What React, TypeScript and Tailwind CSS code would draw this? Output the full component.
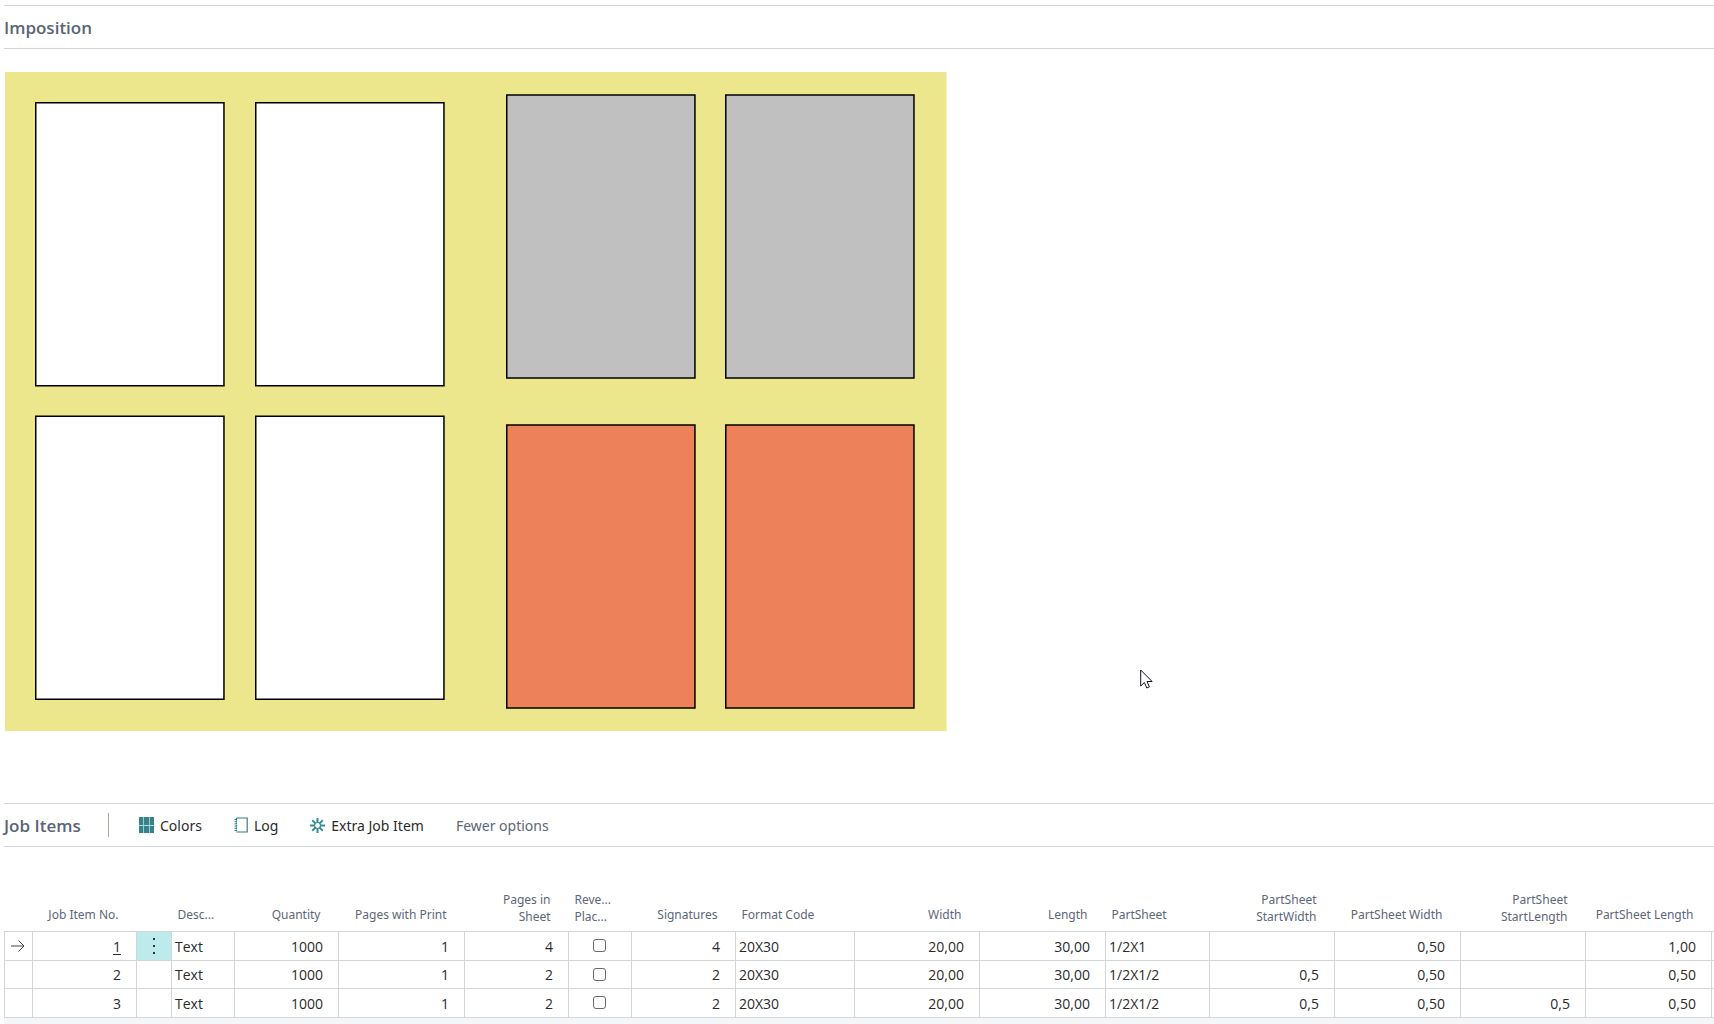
type Column = {
  label: string;
  width: string;
  align: 'left' | 'right' | 'center';
};

const columns: Column[] = [
  { label: 'Job Item No.', width: 'w-[104px]', align: 'right' },
  { label: '', width: 'w-[35px]', align: 'center' },
  { label: 'Desc...', width: 'w-[63px]', align: 'left' },
  { label: 'Quantity', width: 'w-[104px]', align: 'right' },
  { label: 'Pages with Print', width: 'w-[126px]', align: 'right' },
  { label: 'Pages in\nSheet', width: 'w-[104px]', align: 'right' },
  { label: 'Reve...\nPlac...', width: 'w-[63px]', align: 'left' },
  { label: 'Signatures', width: 'w-[104px]', align: 'right' },
  { label: 'Format Code', width: 'w-[119px]', align: 'left' },
  { label: 'Width', width: 'w-[125px]', align: 'right' },
  { label: 'Length', width: 'w-[126px]', align: 'right' },
  { label: 'PartSheet', width: 'w-[104px]', align: 'left' },
  { label: 'PartSheet\nStartWidth', width: 'w-[125px]', align: 'right' },
  { label: 'PartSheet Width', width: 'w-[126px]', align: 'right' },
  { label: 'PartSheet\nStartLength', width: 'w-[125px]', align: 'right' },
  { label: 'PartSheet Length', width: 'w-[126px]', align: 'right' },
];

const MENU = 'menu';
const CHECK = 'check';

const rows: string[][] = [
  ['1', MENU, 'Text', '1000', '1', '4', CHECK, '4', '20X30', '20,00', '30,00', '1/2X1', '', '0,50', '', '1,00'],
  ['2', '', 'Text', '1000', '1', '2', CHECK, '2', '20X30', '20,00', '30,00', '1/2X1/2', '0,5', '0,50', '', '0,50'],
  ['3', '', 'Text', '1000', '1', '2', CHECK, '2', '20X30', '20,00', '30,00', '1/2X1/2', '0,5', '0,50', '0,5', '0,50'],
];

const pages = [
  { x: 30, y: 30, fill: '#ffffff' },
  { x: 250, y: 30, fill: '#ffffff' },
  { x: 30, y: 343.5, fill: '#ffffff' },
  { x: 250, y: 343.5, fill: '#ffffff' },
  { x: 501, y: 22.25, fill: '#c0c0c0' },
  { x: 720, y: 22.25, fill: '#c0c0c0' },
  { x: 501, y: 352.25, fill: '#ed8159' },
  { x: 720, y: 352.25, fill: '#ed8159' },
];

function ImpositionSheet() {
  return (
    <svg width="942" height="659" viewBox="0 0 942 659" role="img" aria-label="Imposition sheet" className="block">
      <rect width="941.5" height="659" fill="#ece68d" />
      {pages.map((p, i) => (
        <rect
          key={i}
          x={p.x + 0.75}
          y={p.y + 0.75}
          width="188.2"
          height="283"
          fill={p.fill}
          stroke="#000"
          strokeWidth="1.5"
        />
      ))}
    </svg>
  );
}

function ColorsIcon() {
  return (
    <svg width="15" height="16" viewBox="0 0 15 16" aria-hidden="true">
      <rect width="15" height="16" fill="#34828a" />
      <path d="M4.5 0v16M10.5 0v16" stroke="#a3c8cb" strokeWidth="1" />
      <path d="M0 8.500h15" stroke="#b9d8da" strokeWidth="1" />
    </svg>
  );
}

function LogIcon() {
  return (
    <svg width="14" height="16" viewBox="0 0 14 16" fill="none" aria-hidden="true">
      <path d="M2.500 1H13.200V15H2.500" stroke="#2f8087" strokeWidth="1.2" />
      <path d="M2.500 1V15" stroke="#2f8087" strokeWidth="1.2" strokeDasharray="1.300 1" />
      <path d="M.5 2.500h2.500M.5 4.700h2.500M.5 6.900h2.500M.5 9.100h2.500M.5 11.300h2.500M.5 13.500h2.500" stroke="#2f8087" strokeWidth="1" />
    </svg>
  );
}

function ExtraIcon() {
  return (
    <svg width="15" height="15" viewBox="0 0 15 15" fill="none" stroke="#3a8b92" strokeWidth="2" aria-hidden="true">
      <circle cx="7.5" cy="7.5" r="3" strokeWidth="1.2" />
      <path d="M7.5 0v4.500M7.500 10.500v4.500M0 7.500h4.500M10.500 7.500h4.500M2.200 2.200l3.200 3.200M9.600 9.600l3.200 3.200M12.800 2.200L9.600 5.400M5.400 9.600l-3.200 3.200" />
    </svg>
  );
}

function Cell({ value, column }: { value: string; column: number }) {
  if (value === MENU) {
    return (
      <button type="button" aria-label="Row options" className="flex h-7 w-full items-center justify-center bg-[#bdeaeb]">
        <svg width="4" height="18" viewBox="0 0 4 18" fill="#333" aria-hidden="true">
          <rect x="1" y="1" width="2" height="2" />
          <rect x="1" y="8" width="2" height="2" />
          <rect x="1" y="15" width="2" height="2" />
        </svg>
      </button>
    );
  }
  if (value === CHECK) {
    return (
      <input
        type="checkbox"
        aria-label="Reverse placement"
        className="mx-auto block size-[13px] appearance-none rounded-[3px] border border-[#6a6a6a] bg-white"
      />
    );
  }
  if (column === 0 && value === '1') {
    return (
      <a href="#item-1" className="underline underline-offset-2">
        {value}
      </a>
    );
  }
  return <>{value}</>;
}

const bodyPadding = { left: 'pl-[3px] text-left', right: 'pr-[15px] text-right', center: 'text-center' };
const headPadding = { left: 'pl-1.5 text-left', right: 'pr-[18px] text-right', center: 'text-center' };

export default function App() {
  return (
    <div className="min-h-screen overflow-hidden bg-white pl-1 pt-[5px] font-['Open_Sans',sans-serif] text-[#2b2b2b]">
      <section>
        <h2 className="flex h-11 items-center border-y border-[#d2d5da] pt-0.5 text-[17px] font-semibold text-[#5a6478]">
          Imposition
        </h2>
        <div className="pl-px pt-[23px]">
          <ImpositionSheet />
        </div>
      </section>

      <section className="mt-[72px]">
        <header className="flex h-11 items-center border-y border-[#d2d5da] font-['Noto_Sans',sans-serif] text-sm">
          <h2 className="w-[104px] pt-0.5 font-['Open_Sans',sans-serif] text-[17px] font-semibold text-[#5a6478]">
            Job Items
          </h2>
          <div className="mr-[30px] h-6 w-px bg-[#a5abb5]" />
          <button type="button" className="mr-8 flex items-center gap-1.5">
            <ColorsIcon />
            <span className="pt-0.5">Colors</span>
          </button>
          <button type="button" className="mr-8 flex items-center gap-1.5">
            <LogIcon />
            <span className="pt-0.5">Log</span>
          </button>
          <button type="button" className="mr-8 flex items-center gap-1.5">
            <ExtraIcon />
            <span className="pt-0.5">Extra Job Item</span>
          </button>
          <button type="button" className="pt-0.5 text-[#5c6779]">
            Fewer options
          </button>
        </header>

        <table className="mt-8 w-full table-fixed border-collapse text-sm">
          <thead>
            <tr className="h-[52px] font-['Noto_Sans',sans-serif] text-xs leading-[17px] text-[#5c6779]">
              <th className="w-7" aria-label="Selected" />
              {columns.map((c, i) => (
                <th
                  key={i}
                  className={`${c.width} ${headPadding[c.align]} ${c.label.includes('\n') ? 'pb-1.5' : 'pb-2'} whitespace-pre align-bottom font-normal`}
                >
                  {c.label}
                </th>
              ))}
              <th aria-hidden="true" />
            </tr>
          </thead>
          <tbody>
            {rows.map((row, r) => (
              <tr key={r} className={r === 1 ? 'h-7' : 'h-[29px]'}>
                <td className="border border-[#d2d5da] p-0">
                  {r === 0 && (
                    <svg width="14" height="14" viewBox="0 0 14 14" fill="none" stroke="#444" className="ml-1.5" aria-hidden="true">
                      <path d="M0 7h13M7.500 1.500L13 7l-5.500 5.500" />
                    </svg>
                  )}
                </td>
                {row.map((value, i) => (
                  <td
                    key={i}
                    className={`border border-[#d2d5da] leading-5 ${value === MENU ? 'p-0' : value === CHECK ? 'py-0 pr-0.5' : `pb-0 pt-0.5 ${bodyPadding[columns[i].align]}`}`}
                  >
                    <Cell value={value} column={i} />
                  </td>
                ))}
                <td className="border-y border-[#d2d5da]" />
              </tr>
            ))}
          </tbody>
        </table>
        <div className="h-2 bg-[#f5f6f8]" />
      </section>

      <svg
        width="13"
        height="20"
        viewBox="0 0 13 20"
        className="pointer-events-none absolute left-[1140px] top-[669px]"
        aria-hidden="true"
      >
        <path d="M.7 1v16l3.700-3.500 2.400 5.500 2.600-1.100-2.400-5.400h5.100z" fill="#fff" stroke="#111122" strokeWidth="1" />
      </svg>
    </div>
  );
}
